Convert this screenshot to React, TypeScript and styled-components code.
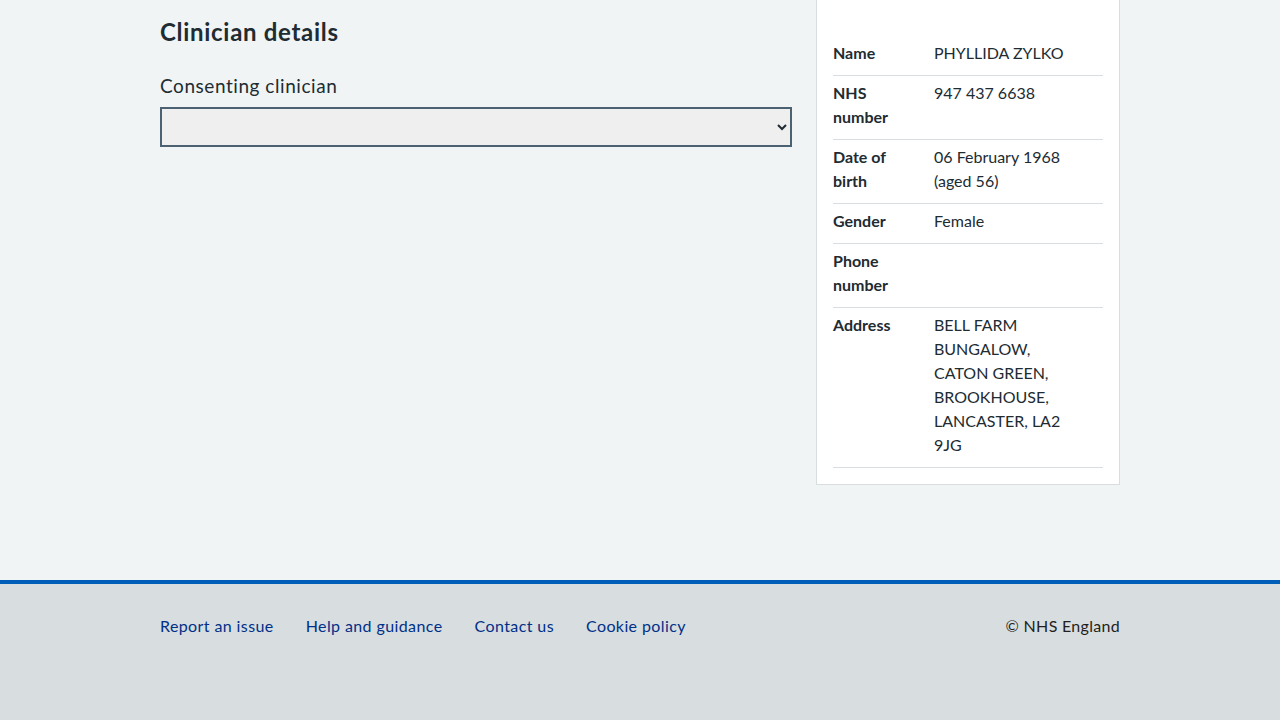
import React from "react";
import styled, { createGlobalStyle } from "styled-components";

const Global = createGlobalStyle`
  html, body { margin: 0; padding: 0; }
  body {
    background: #f0f4f5;
    color: #212b32;
    font-family: Lato, "Noto Sans", Arial, sans-serif;
    -webkit-font-smoothing: antialiased;
  }
  * { box-sizing: border-box; }
`;

const Page = styled.div`
  min-height: 720px;
  display: flex;
  flex-direction: column;
`;

const Main = styled.main`
  flex: 1;
  width: 960px;
  margin: 0 auto;
  display: grid;
  grid-template-columns: 632px 304px;
  column-gap: 24px;
  align-items: start;
`;

const LeftCol = styled.div`
  padding-top: 16px;
`;

const Heading = styled.h2`
  margin: 0 0 24px;
  font-size: 24px;
  line-height: 32px;
  font-weight: 700;
  letter-spacing: 0.7px;
`;

const Label = styled.label`
  display: block;
  font-size: 19px;
  line-height: 28px;
  margin-bottom: 7px;
  letter-spacing: 0.55px;
`;

const Select = styled.select`
  display: block;
  width: 632px;
  height: 40px;
  border: 2px solid #4c6272;
  border-radius: 0;
  background-color: #efefef;
  font-family: inherit;
  font-size: 16px;
  padding: 0 6px;
  color: #212b32;
`;

const Card = styled.aside`
  background: #ffffff;
  border: 1px solid #d8dde0;
  border-top: 0;
  padding: 36px 16px 16px;
`;

const List = styled.dl`
  margin: 0;
`;

const Row = styled.div`
  display: grid;
  grid-template-columns: 101px 135px;
  padding: 5px 0 10px;
  border-bottom: 1px solid #d8dde0;
  font-size: 16px;
  line-height: 24px;
`;

const Key = styled.dt`
  font-weight: 700;
  padding-right: 16px;
`;

const Value = styled.dd`
  margin: 0;
`;

const Footer = styled.footer`
  height: 140px;
  background: #d8dde0;
  border-top: 4px solid #005eb8;
  padding-top: 30px;
`;

const FooterInner = styled.div`
  width: 960px;
  margin: 0 auto;
  display: flex;
  justify-content: space-between;
  align-items: center;
  font-size: 16px;
  line-height: 24px;
`;

const Links = styled.ul`
  list-style: none;
  margin: 0;
  padding: 0;
  display: flex;
  gap: 32px;
`;

const FooterLink = styled.a`
  color: #003087;
  text-decoration: none;
  letter-spacing: 0.4px;
`;

const Copyright = styled.p`
  margin: 0;
  color: #231f20;
  letter-spacing: 0.3px;
`;

const rows: [string, React.ReactNode][] = [
  ["Name", "PHYLLIDA ZYLKO"],
  ["NHS number", "947 437 6638"],
  ["Date of birth", "06 February 1968 (aged 56)"],
  ["Gender", "Female"],
  ["Phone number", ""],
  ["Address", "BELL FARM BUNGALOW, CATON GREEN, BROOKHOUSE, LANCASTER, LA2 9JG"],
];

export default function App() {
  return (
    <>
      <Global />
      <Page>
        <Main>
          <LeftCol>
            <Heading>Clinician details</Heading>
            <Label htmlFor="clinician">Consenting clinician</Label>
            <Select id="clinician" defaultValue="">
              <option value=""></option>
            </Select>
          </LeftCol>
          <Card>
            <List>
              {rows.map(([k, v]) => (
                <Row key={k}>
                  <Key>{k}</Key>
                  <Value>{v}</Value>
                </Row>
              ))}
            </List>
          </Card>
        </Main>
        <Footer>
          <FooterInner>
            <Links>
              <li><FooterLink href="#">Report an issue</FooterLink></li>
              <li><FooterLink href="#">Help and guidance</FooterLink></li>
              <li><FooterLink href="#">Contact us</FooterLink></li>
              <li><FooterLink href="#">Cookie policy</FooterLink></li>
            </Links>
            <Copyright>© NHS England</Copyright>
          </FooterInner>
        </Footer>
      </Page>
    </>
  );
}
